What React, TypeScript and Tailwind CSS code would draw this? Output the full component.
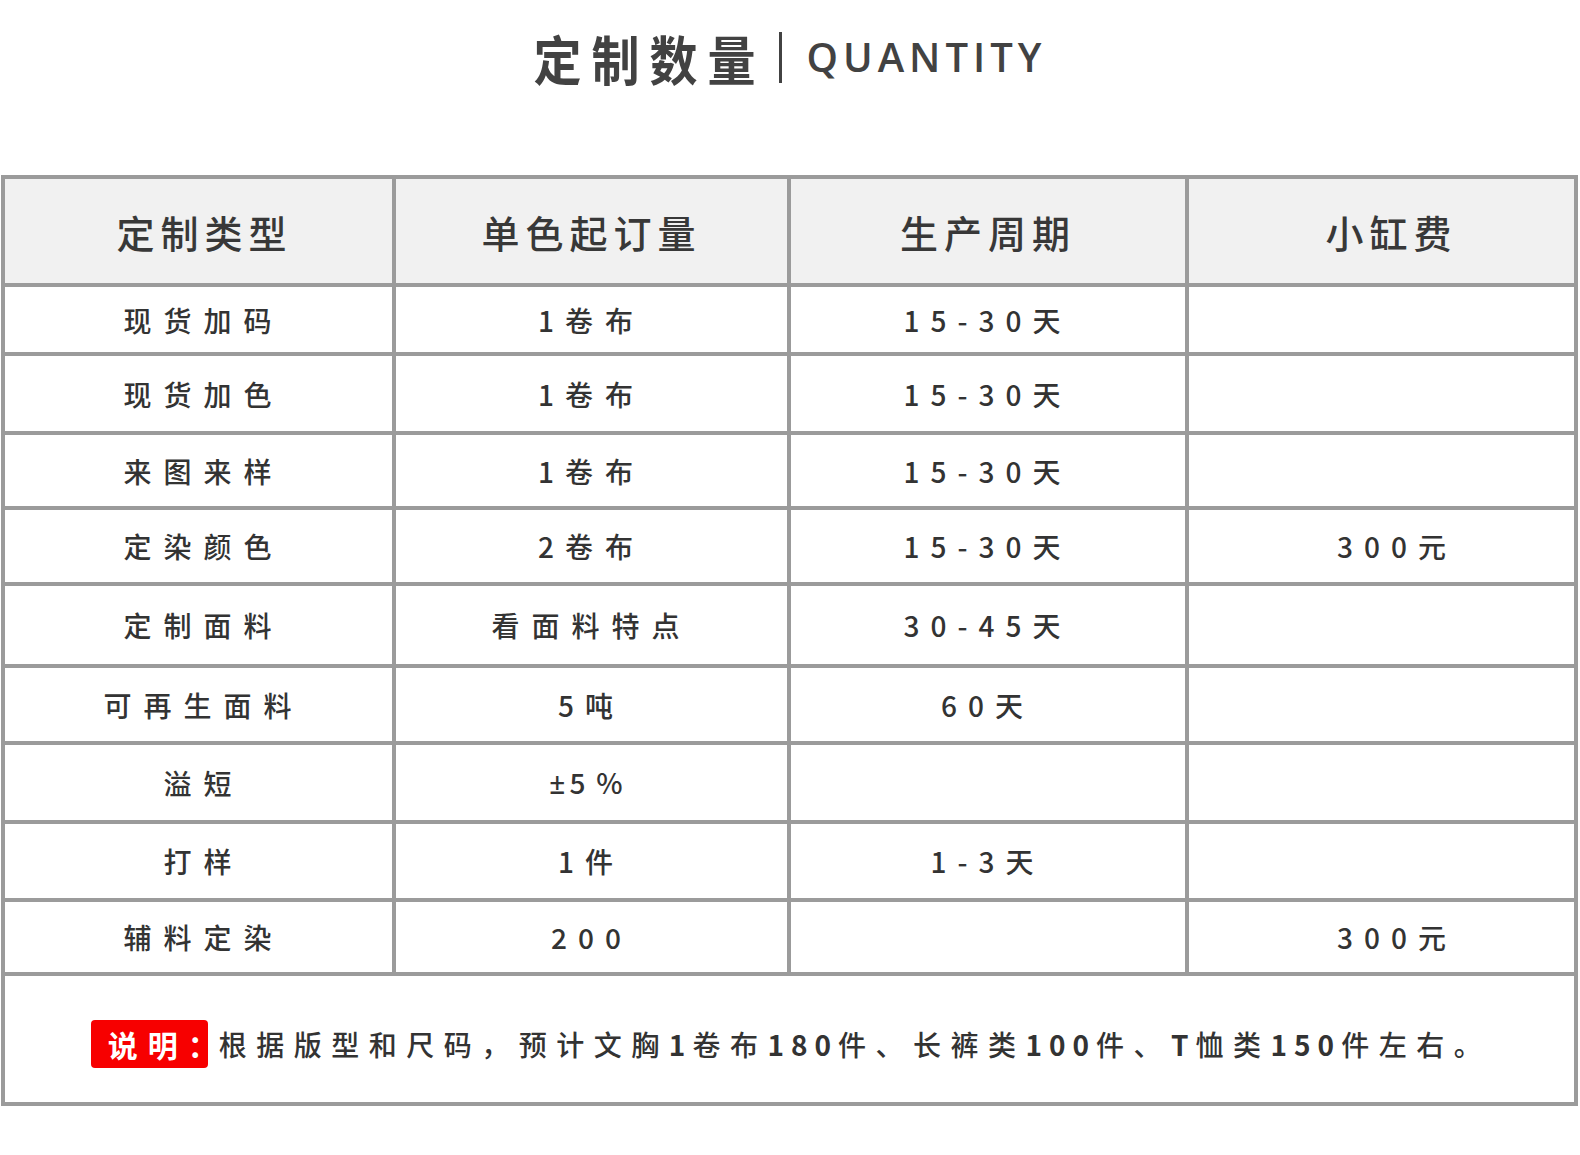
import type { ReactNode } from "react"

const CJK = '"Noto Sans CJK SC", "Noto Sans", sans-serif'

// ASCII runs (digits, %, -) get their own tracking; ± comes from a latin font
function Spaced({ text, latin }: { text: string; latin: string }) {
  const parts = text.split(/(±|[0-9A-Za-z%\-]+)/).filter(Boolean)
  return (
    <>
      {parts.map((p, i) => {
        if (p === "±")
          return (
            <span key={i} className="tracking-[4px]" style={{ fontFamily: '"Noto Sans", sans-serif' }}>
              {p}
            </span>
          )
        if (/[0-9A-Za-z%\-]/.test(p))
          return (
            <span key={i} className={latin}>
              {p}
            </span>
          )
        return <span key={i}>{p}</span>
      })}
    </>
  )
}

const HEADERS = ["定制类型", "单色起订量", "生产周期", "小缸费"]
const HEAD_PAD = ["pl-[12px]", "", "", "pl-[20px]"]

const ROWS: Array<{ h: string; cells: string[] }> = [
  { h: "h-[65px]", cells: ["现货加码", "1卷布", "15-30天", ""] },
  { h: "h-[75px]", cells: ["现货加色", "1卷布", "15-30天", ""] },
  { h: "h-[71px]", cells: ["来图来样", "1卷布", "15-30天", ""] },
  { h: "h-[72px]", cells: ["定染颜色", "2卷布", "15-30天", "300元"] },
  { h: "h-[78px]", cells: ["定制面料", "看面料特点", "30-45天", ""] },
  { h: "h-[73px]", cells: ["可再生面料", "5吨", "60天", ""] },
  { h: "h-[75px]", cells: ["溢短", "±5%", "", ""] },
  { h: "h-[74px]", cells: ["打样", "1件", "1-3天", ""] },
  { h: "h-[70px]", cells: ["辅料定染", "200", "", "300元"] },
]

// the outer columns' text sits a little right of centre in the design
const COL_PAD = ["pl-[10px]", "", "", "pl-[32px]"]

function Cell({ className, children }: { className: string; children?: ReactNode }) {
  return (
    <div className={`flex items-center justify-center ${className}`}>
      {children}
    </div>
  )
}

function Bold({ children }: { children: ReactNode }) {
  return <span className="font-bold tracking-[7px]">{children}</span>
}

export default function App() {
  return (
    <div className="w-[1580px] h-[1155px] bg-white" style={{ fontFamily: CJK }}>
      {/* Title */}
      <div className="h-[114px] flex items-center justify-center">
        <span className="text-[48px] font-bold tracking-[10px] text-[#424242] leading-none scale-y-[1.12]">
          定制数量
        </span>
        <span className="ml-[14px] mr-[24px] w-[3px] h-[51px] bg-[#424242]" />
        <span
          className="text-[40px] font-semibold tracking-[5px] text-[#424242] leading-none"
          style={{ fontFamily: '"Open Sans", "Noto Sans", sans-serif' }}
        >
          QUANTITY
        </span>
      </div>

      {/* Table */}
      <div className="mt-[61px] ml-[1px] w-[1577px] bg-[#9b9b9b] p-[4px] grid grid-cols-[387px_391px_394px_1fr] gap-[4px]">
        {HEADERS.map((h, i) => (
          <Cell key={h} className={`h-[104px] bg-[#f1f1f1] ${HEAD_PAD[i]}`}>
            <span className="text-[38px] font-medium tracking-[6px] text-[#383838]">{h}</span>
          </Cell>
        ))}

        {ROWS.map((row, r) =>
          row.cells.map((c, i) => (
            <Cell key={`${r}-${i}`} className={`${row.h} bg-white ${COL_PAD[i]}`}>
              <span className="text-[28px] font-medium tracking-[12px] text-[#333333]">
                <Spaced text={c} latin="tracking-[11px]" />
              </span>
            </Cell>
          ))
        )}

        <div className="col-span-4 h-[126px] bg-white flex items-center justify-center pt-[10px] pl-[3px]">
          <span className="h-[48px] pl-[17px] shrink-0 rounded-[4px] bg-[#f70000] flex items-center text-white text-[30px] font-bold tracking-[10px] whitespace-nowrap">
            <span>说明</span>
            <span className="tracking-normal mr-[-10px]">：</span>
          </span>
          <span className="ml-[11px] text-[28px] font-medium tracking-[9.5px] text-[#333333] whitespace-nowrap">
            根据版型和尺码，预计文胸<Bold>1</Bold>卷布<Bold>180</Bold>件、长裤类<Bold>100</Bold>件、<Bold>T</Bold>恤类<Bold>150</Bold>件左右。
          </span>
        </div>
      </div>
    </div>
  )
}
